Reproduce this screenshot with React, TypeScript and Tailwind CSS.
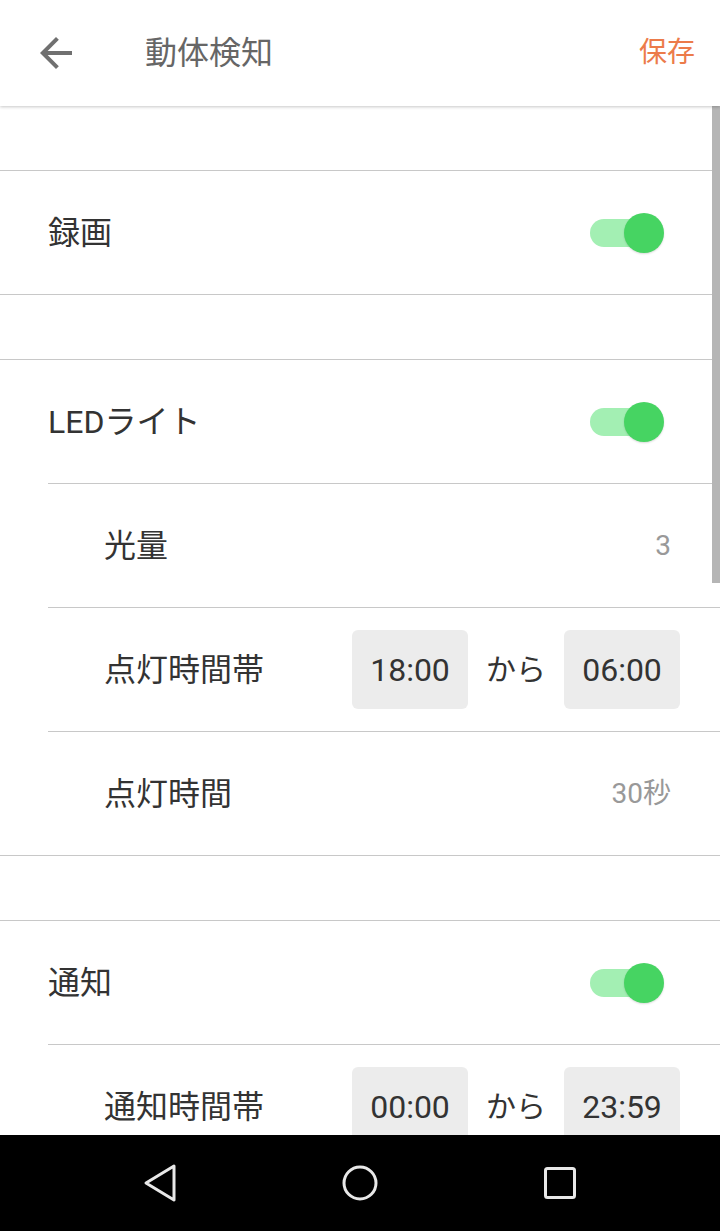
import React from "react"

const font = { fontFamily: 'Roboto, "Noto Sans CJK JP", sans-serif' }

function Toggle() {
  return (
    <div className="relative w-[74px] h-[40px] flex items-center">
      <div className="w-[66px] h-[28px] rounded-full bg-[#a3efb3]" />
      <div className="absolute right-0 top-0 w-[40px] h-[40px] rounded-full bg-[#46d462] shadow-[0_1px_2px_rgba(0,0,0,0.15)]" />
    </div>
  )
}

function Gap() {
  return <div className="h-[65px] border-b border-[#c8c8c8] bg-white" />
}

function MainRow({ label, last }: { label: string; last?: boolean }) {
  return (
    <div className={"flex items-center justify-between pl-12 pr-[56px] " + (last ? "h-[124px] border-b border-[#c8c8c8]" : "h-[123px]")}>
      <span className="text-[32px] text-[#333]">{label}</span>
      <Toggle />
    </div>
  )
}

function SubRow({ label, children }: { label: string; children: React.ReactNode }) {
  return (
    <div className="ml-12 border-t border-[#c8c8c8]">
      <div className="h-[123px] flex items-center justify-between pl-[56px]">
        <span className="text-[32px] text-[#333]">{label}</span>
        {children}
      </div>
    </div>
  )
}

function TimeBox({ t }: { t: string }) {
  return (
    <div className="w-[116px] h-[79px] rounded-md bg-[#ececec] flex items-center justify-center text-[32px] text-[#333]">
      {t}
    </div>
  )
}

function TimeRange({ from, to }: { from: string; to: string }) {
  return (
    <div className="flex items-center gap-[18px] pr-10">
      <TimeBox t={from} />
      <span className="w-[60px] text-center text-[30px] text-[#333]">から</span>
      <TimeBox t={to} />
    </div>
  )
}

export default function App() {
  return (
    <div style={font} className="w-[720px] h-[1231px] flex flex-col bg-white overflow-hidden">
      <header className="relative z-10 h-[106px] shrink-0 flex items-center bg-white shadow-[0_1px_3px_rgba(0,0,0,0.22)]">
        <svg viewBox="0 0 24 24" className="ml-8 w-12 h-12" fill="#707070">
          <path d="M20 11H7.83l5.59-5.59L12 4l-8 8 8 8 1.41-1.41L7.83 13H20v-2z" />
        </svg>
        <h1 className="ml-[65px] text-[32px] text-[#666]">動体検知</h1>
        <button className="ml-auto mr-[25px] text-[28px] text-[#ec7b4a]">保存</button>
      </header>

      <main className="relative flex-1 overflow-hidden">
        <Gap />
        <MainRow label="録画" last />
        <Gap />
        <MainRow label="LEDライト" />
        <SubRow label="光量">
          <span className="pr-[49px] text-[28px] text-[#999]">3</span>
        </SubRow>
        <SubRow label="点灯時間帯">
          <TimeRange from="18:00" to="06:00" />
        </SubRow>
        <SubRow label="点灯時間">
          <span className="pr-[49px] text-[28px] text-[#999]">30秒</span>
        </SubRow>
        <div className="border-t border-[#c8c8c8]" />
        <Gap />
        <MainRow label="通知" />
        <SubRow label="通知時間帯">
          <TimeRange from="00:00" to="23:59" />
        </SubRow>

        <div className="absolute right-0 top-0 w-2 h-[477px] bg-[#b5b5b5]" />
      </main>

      <nav className="h-[96px] shrink-0 bg-black flex items-center justify-center gap-[160px]">
        <svg viewBox="0 0 40 40" className="w-10 h-10" fill="none" stroke="#e8e8e8" strokeWidth="3" strokeLinejoin="round">
          <path d="M34 3 L6 20 L34 37 Z" />
        </svg>
        <svg viewBox="0 0 40 40" className="w-10 h-10" fill="none" stroke="#e8e8e8" strokeWidth="3">
          <circle cx="20" cy="20" r="16" />
        </svg>
        <svg viewBox="0 0 40 40" className="w-10 h-10" fill="none" stroke="#e8e8e8" strokeWidth="3">
          <rect x="5.5" y="5.5" width="29" height="29" rx="2" />
        </svg>
      </nav>
    </div>
  )
}
